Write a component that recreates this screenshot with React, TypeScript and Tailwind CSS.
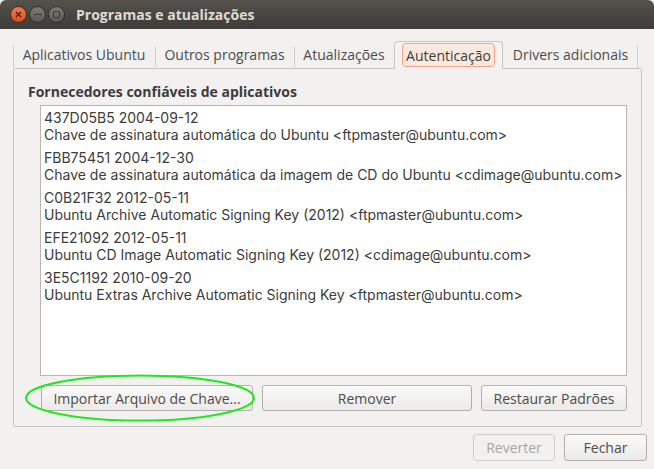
import React from "react";

const keys = [
  ["437D05B5 2004-09-12", "Chave de assinatura automática do Ubuntu <ftpmaster@ubuntu.com>"],
  ["FBB75451 2004-12-30", "Chave de assinatura automática da imagem de CD do Ubuntu <cdimage@ubuntu.com>"],
  ["C0B21F32 2012-05-11", "Ubuntu Archive Automatic Signing Key (2012) <ftpmaster@ubuntu.com>"],
  ["EFE21092 2012-05-11", "Ubuntu CD Image Automatic Signing Key (2012) <cdimage@ubuntu.com>"],
  ["3E5C1192 2010-09-20", "Ubuntu Extras Archive Automatic Signing Key <ftpmaster@ubuntu.com>"],
];

const btn =
  "h-[26px] rounded-[3px] border border-[#b3afa9] bg-gradient-to-b from-[#fafaf9] to-[#ebeae8] text-[#4c4c4c] text-[14px] flex items-center justify-center shadow-[inset_0_1px_0_#ffffff]";

export default function App() {
  return (
    <div
      className="w-[654px] h-[469px] bg-[#f2f1f0] flex flex-col overflow-hidden text-[#3c3c3c]"
      style={{ fontFamily: '"Open Sans", "Noto Sans", sans-serif' }}
    >
      {/* Title bar */}
      <div className="h-[29px] shrink-0 rounded-t-[6px] bg-gradient-to-b from-[#55524c] to-[#3d3c38] flex items-center pl-[10px]">
        <div className="flex items-center gap-[2px]">
          <div className="w-[17px] h-[17px] rounded-full bg-gradient-to-b from-[#f57a4b] to-[#df4a16] border border-[#3a2b24] flex items-center justify-center">
            <svg width="7" height="7" viewBox="0 0 7 7">
              <path d="M1 1L6 6M6 1L1 6" stroke="#4a1e0c" strokeWidth="1.3" />
            </svg>
          </div>
          <div className="w-[17px] h-[17px] rounded-full bg-gradient-to-b from-[#7d7a74] to-[#5b5953] border border-[#2f2e2b] flex items-center justify-center">
            <div className="w-[8px] h-[1.5px] bg-[#3a3935]" />
          </div>
          <div className="w-[17px] h-[17px] rounded-full bg-gradient-to-b from-[#7d7a74] to-[#5b5953] border border-[#2f2e2b] flex items-center justify-center">
            <div className="w-[7px] h-[7px] border-[1.3px] border-[#3a3935] rounded-[1px]" />
          </div>
        </div>
        <div className="ml-[11px] text-[14px] font-bold text-[#dfdbd2]">Programas e atualizações</div>
      </div>

      {/* Body */}
      <div className="flex flex-col pl-[13px] pr-[8px] pt-[12px]">
        {/* Tabs */}
        <div className="flex items-start h-[27px] text-[14px] text-[#4c4c4c] relative z-10">
          <div className="w-[142px] h-[27px] relative flex items-center justify-center">
            <div className="absolute left-0 top-[4px] bottom-0 w-px bg-[#d3d0cc]" />
            Aplicativos Ubuntu
          </div>
          <div className="w-[139px] h-[27px] flex items-center justify-center relative">
            <div className="absolute left-0 top-[6px] bottom-[1px] w-px bg-[#d3d0cc]" />
            Outros programas
          </div>
          <div className="w-[100px] h-[27px] flex items-center justify-center relative">
            <div className="absolute left-0 top-[6px] bottom-[1px] w-px bg-[#d3d0cc]" />
            Atualizações
          </div>
          <div className="w-[109px] h-[28px] border border-b-0 border-[#c8c5c1] rounded-t-[4px] bg-[#f4f3f2] flex items-start justify-center pt-[1px]">
            <div className="w-[93px] h-[24px] border border-[#f3a585] bg-[#fbe8df] rounded-[4px] flex items-center justify-center text-[#3c3c3c]">
              Autenticação
            </div>
          </div>
          <div className="w-[135px] h-[27px] relative flex items-center justify-center">
            <div className="absolute right-0 top-[4px] bottom-0 w-px bg-[#d3d0cc]" />
            Drivers adicionais
          </div>
        </div>

        {/* Notebook page */}
        <div className="w-[629px] h-[359px] border border-[#c8c5c1] rounded-[2px] bg-[#f2f1f0] flex flex-col pl-[14px] pt-[14px]">
          <div className="text-[14px] font-bold leading-[17px] text-[#3c3c3c]">Fornecedores confiáveis de aplicativos</div>
          <div
            className="ml-[12px] mt-[5px] w-[587px] h-[271px] bg-white border border-[#b9b6b1] pl-[3px] pt-[3px]"
            style={{ fontFamily: 'Inter, "Open Sans", sans-serif' }}
          >
            {keys.map(([a, b]) => (
              <div key={a} className="h-[40px] text-[14px] leading-[17px] text-[#3c3c3c] whitespace-nowrap">
                <div>{a}</div>
                <div>{b}</div>
              </div>
            ))}
          </div>
          <div className="flex mt-[9px] ml-[13px] gap-[9px] relative">
            <div className={`${btn} w-[212px]`}>Importar Arquivo de Chave...</div>
            <div className={`${btn} w-[210px]`}>Remover</div>
            <div className={`${btn} w-[146px]`}>Restaurar Padrões</div>
            <svg className="absolute left-[-17px] top-[-11px]" width="234" height="50" viewBox="0 0 234 50">
              <ellipse cx="116" cy="24" rx="114" ry="22.5" fill="none" stroke="#1ee81e" strokeWidth="2" />
            </svg>
          </div>
        </div>

        {/* Bottom buttons */}
        <div className="flex justify-end gap-[9px] mt-[7px] mr-[-1px]">
          <div className="h-[27px] w-[82px] rounded-[3px] border border-[#d0cdc9] bg-[#f2f1f0] text-[#a8a6a2] text-[14px] flex items-center justify-center">Reverter</div>
          <div className={`${btn} w-[83px] h-[27px]`}>Fechar</div>
        </div>
      </div>
    </div>
  );
}
